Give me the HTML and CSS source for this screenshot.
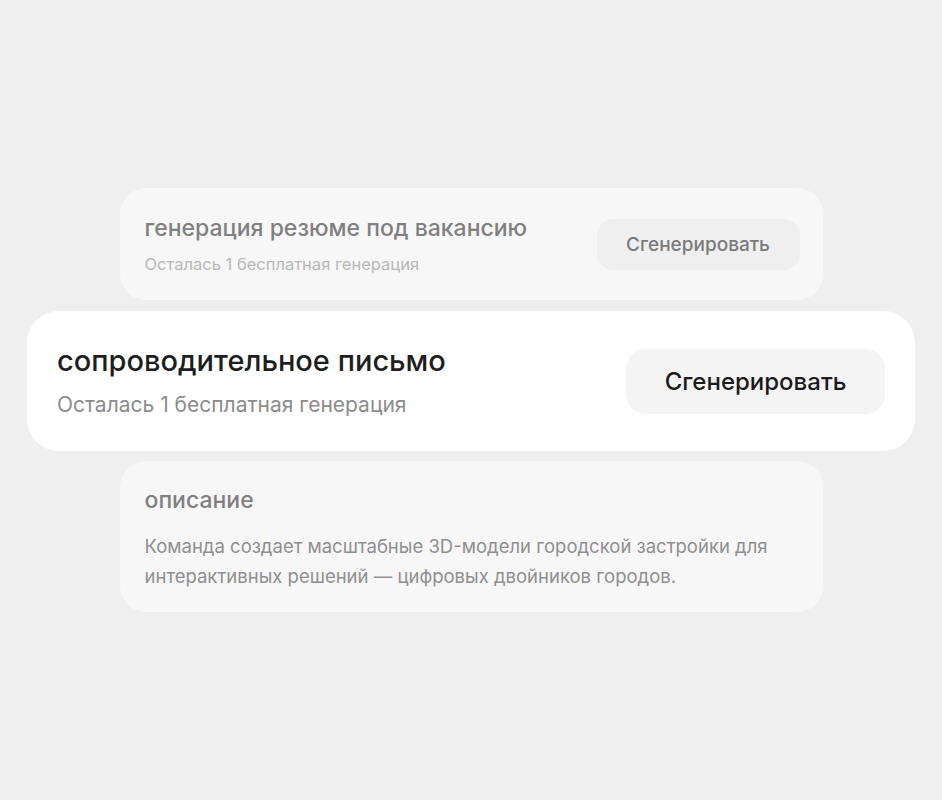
FILE: index.html
```html
<!DOCTYPE html>
<html lang="ru">
<head>
<meta charset="utf-8">
<link rel="stylesheet" href="styles.css">
</head>
<body>
<div class="frame">
  <div class="card card-small">
    <div class="text">
      <div class="title-small">генерация резюме под вакансию</div>
      <div class="sub-small">Осталась 1 бесплатная генерация</div>
    </div>
    <div class="btn btn-small">Сгенерировать</div>
  </div>
  <div class="card card-main">
    <div class="text">
      <div class="title-main">сопроводительное письмо</div>
      <div class="sub-main">Осталась 1 бесплатная генерация</div>
    </div>
    <div class="btn btn-main">Сгенерировать</div>
  </div>
  <div class="card card-desc">
    <div class="title-small">описание</div>
    <div class="desc-body">Команда создает масштабные 3D-модели городской застройки для интерактивных решений — цифровых двойников городов.</div>
  </div>
</div>
</body>
</html>
```
FILE: styles.css
```css
html, body {
  margin: 0;
  padding: 0;
  background: #efefef;
}
body {
  font-family: "Inter", "Noto Sans", sans-serif;
}
.frame {
  width: 942px;
  height: 800px;
  background: #efefef;
  display: flex;
  flex-direction: column;
  align-items: center;
  justify-content: center;
  gap: 10px;
}
.card {
  box-sizing: border-box;
  display: flex;
  align-items: center;
  justify-content: space-between;
}
.text {
  display: flex;
  flex-direction: column;
}
.card-small {
  width: 703px;
  height: 112px;
  background: #f7f7f7;
  border-radius: 26px;
  padding: 0 23px 0 25px;
}
.title-small {
  font-size: 23px;
  line-height: 28px;
  color: #808080;
  font-weight: 500;
}
.sub-small {
  font-size: 16.5px;
  line-height: 20px;
  color: #b8b8b8;
  margin-top: 12px;
}
.btn {
  display: flex;
  align-items: center;
  justify-content: center;
  box-sizing: border-box;
}
.btn-small {
  width: 203px;
  height: 51px;
  background: #efefef;
  border-radius: 16px;
  font-size: 19px;
  color: #7a7a7a;
  font-weight: 500;
}
.card-main {
  width: 888px;
  height: 140px;
  background: #ffffff;
  border-radius: 32px;
  padding: 0 30px;
  margin-top: 1px;
}
.title-main {
  font-size: 29px;
  line-height: 34px;
  color: #1e1e1e;
  font-weight: 500;
}
.sub-main {
  font-size: 21px;
  line-height: 26px;
  color: #8c8c8c;
  margin-top: 14px;
}
.btn-main {
  width: 259px;
  height: 65px;
  background: #f5f4f4;
  border-radius: 20px;
  font-size: 24px;
  color: #1b1b1b;
  font-weight: 500;
}
.card-desc {
  width: 703px;
  height: 151px;
  background: #f7f7f7;
  border-radius: 26px;
  padding: 25px 25px 0 25px;
  flex-direction: column;
  align-items: flex-start;
  justify-content: flex-start;
}
.desc-body {
  font-size: 18.5px;
  line-height: 30px;
  color: #8f8f8f;
  margin-top: 17px;
  width: 650px;
}
```
